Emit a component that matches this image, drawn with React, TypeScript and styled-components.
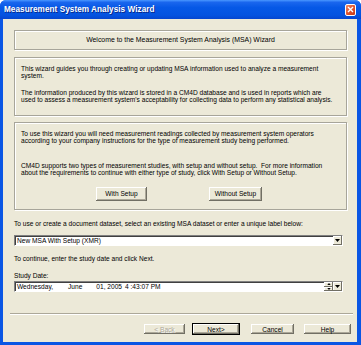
import React from "react";
import styled, { createGlobalStyle } from "styled-components";

const Global = createGlobalStyle`
  body {
    margin: 0;
    background: #fff;
  }
`;

const Window = styled.div`
  width: 361px;
  height: 345px;
  box-sizing: border-box;
  display: flex;
  flex-direction: column;
  background: #0a56e4;
  border-radius: 6px 6px 0 0;
  padding: 0 4px 3px 3px;
  font-family: "Liberation Sans", Arial, sans-serif;
  font-size: 6.6px;
  line-height: 7.4px;
  color: #000;
`;

const TitleBar = styled.div`
  height: 19px;
  margin: 0 -4px 0 -3px;
  padding: 0 4px 0 4px;
  display: flex;
  align-items: center;
  justify-content: space-between;
  border-radius: 6px 6px 0 0;
  background: linear-gradient(#4a97ff 0%, #1a66ee 12%, #0658e6 40%, #0453e0 80%, #0646cf 100%);
`;

const Title = styled.span`
  color: #fff;
  font-weight: bold;
  font-size: 8.2px;
  letter-spacing: 0.05px;
  text-shadow: 1px 1px 0 #0a2a8a;
`;

const CloseButton = styled.div`
  width: 11px;
  height: 12px;
  margin-right: 1px;
  border: 1px solid #fff;
  border-radius: 2px;
  box-sizing: border-box;
  background: linear-gradient(135deg, #f08a6a, #e0502a 55%, #c43a16);
  display: flex;
  align-items: center;
  justify-content: center;
`;

const Client = styled.div`
  flex: 1;
  background: #ece9d8;
  display: flex;
  flex-direction: column;
  padding: 11px 10px 0 11px;
`;

const WelcomeBox = styled.div`
  height: 20px;
  box-sizing: border-box;
  border: 1px solid #a7a59a;
  box-shadow: inset 1px 1px 0 #fff, 1px 1px 0 #fff;
  display: flex;
  align-items: center;
  justify-content: center;
  font-size: 6.9px;
`;

const GroupBox = styled.div<{ $height: number; $top: number }>`
  margin-top: ${p => p.$top}px;
  height: ${p => p.$height}px;
  box-sizing: border-box;
  border: 1px solid #a7a59a;
  box-shadow: inset 1px 1px 0 #fff, 1px 1px 0 #fff;
  padding: 7px 6px 0 6px;
  display: flex;
  flex-direction: column;
`;

const Para = styled.p<{ $top?: number }>`
  margin: ${p => p.$top || 0}px 0 0 0;
  white-space: nowrap;
`;

const ButtonRow = styled.div`
  margin-top: 9px;
  display: flex;
  justify-content: center;
  gap: 60px;
  padding-right: 3px;
`;

const Button = styled.div<{ $width: number; $height?: number; $left?: number; $default?: boolean; $disabled?: boolean }>`
  width: ${p => p.$width}px;
  height: ${p => p.$height || 12}px;
  margin-left: ${p => p.$left || 0}px;
  box-sizing: border-box;
  background: #ece9d8;
  border: 1px solid ${p => (p.$default ? "#000" : "#ece9d8")};
  box-shadow: inset -1px -1px 0 #716f64, inset 1px 1px 0 #fff, inset -2px -2px 0 #aca899;
  display: flex;
  align-items: center;
  justify-content: center;
  color: ${p => (p.$disabled ? "#aca899" : "#000")};
  text-shadow: ${p => (p.$disabled ? "1px 1px 0 #fff" : "none")};
`;

const Label = styled.div<{ $top: number }>`
  margin-top: ${p => p.$top}px;
  white-space: nowrap;
`;

const Field = styled.div<{ $top: number }>`
  margin-top: ${p => p.$top}px;
  width: 329px;
  height: 11px;
  box-sizing: border-box;
  background: #fff;
  border: 1px solid;
  border-color: #808080 #fff #fff #808080;
  box-shadow: inset 1px 1px 0 #404040;
  display: flex;
  align-items: center;
  padding-left: 2px;
  white-space: pre;
`;

const FieldText = styled.span`
  flex: 1;
`;

const DropButton = styled.div`
  width: 9px;
  height: 9px;
  box-sizing: border-box;
  background: #ece9d8;
  box-shadow: inset -1px -1px 0 #716f64, inset 1px 1px 0 #fff;
  display: flex;
  align-items: center;
  justify-content: center;
`;

const Spin = styled.div`
  width: 9px;
  height: 9px;
  display: flex;
  flex-direction: column;
`;

const SpinHalf = styled.div`
  flex: 1;
  background: #ece9d8;
  box-shadow: inset -1px -1px 0 #716f64, inset 1px 1px 0 #fff;
  display: flex;
  align-items: center;
  justify-content: center;
`;

const DatePart = styled.span<{ $left: number }>`
  margin-left: ${p => p.$left}px;
`;

const Separator = styled.div`
  margin: 21px -6px 0 -4px;
  height: 0;
  border-top: 1px solid #aca899;
  border-bottom: 1px solid #fff;
`;

const Footer = styled.div`
  margin-top: 8px;
  display: flex;
  justify-content: flex-end;
  margin-right: -5px;
`;

const Arrow = ({ up, small }: { up?: boolean; small?: boolean }) => (
  <svg width={small ? 4 : 5} height={small ? 2 : 3} viewBox="0 0 5 3">
    <path d={up ? "M0 3 L2.5 0 L5 3 Z" : "M0 0 L5 0 L2.5 3 Z"} fill="#000" />
  </svg>
);

export default function App() {
  return (
    <>
      <Global />
      <Window>
        <TitleBar>
          <Title>Measurement System Analysis Wizard</Title>
          <CloseButton>
            <svg width="7" height="7" viewBox="0 0 7 7">
              <path d="M1 1 L6 6 M6 1 L1 6" stroke="#fff" strokeWidth="1.4" />
            </svg>
          </CloseButton>
        </TitleBar>
        <Client>
          <WelcomeBox>Welcome to the Measurement System Analysis (MSA) Wizard</WelcomeBox>
          <GroupBox $top={7} $height={59}>
            <Para>
              This wizard guides you through creating or updating MSA information used to analyze a measurement
              <br />
              system.
            </Para>
            <Para $top={9}>
              The information produced by this wizard is stored in a CM4D database and is used in reports which are
              <br />
              used to assess a measurement system's acceptability for collecting data to perform any statistical analysis.
            </Para>
          </GroupBox>
          <GroupBox $top={6} $height={88}>
            <Para>
              To use this wizard you will need measurement readings collected by measurement system operators
              <br />
              according to your company instructions for the type of measurement study being performed.
            </Para>
            <Para $top={17}>
              CM4D supports two types of measurement studies, with setup and without setup.&nbsp; For more information
              <br />
              about the requirements to continue with either type of study, click With Setup or Without Setup.
            </Para>
            <ButtonRow>
              <Button $width={53} $height={16}>With Setup</Button>
              <Button $width={55} $height={16}>Without Setup</Button>
            </ButtonRow>
          </GroupBox>
          <Label $top={10}>To use or create a document dataset, select an existing MSA dataset or enter a unique label below:</Label>
          <Field $top={8}>
            <FieldText>New MSA With Setup (XMR)</FieldText>
            <DropButton><Arrow /></DropButton>
          </Field>
          <Label $top={9}>To continue, enter the study date and click Next.</Label>
          <Label $top={9}>Study Date:</Label>
          <Field $top={2}>
            <FieldText>
              Wednesday,
              <DatePart $left={15}>June</DatePart>
              <DatePart $left={14}>01, 2005</DatePart>
              <DatePart $left={3}>4 :43:07 PM</DatePart>
            </FieldText>
            <Spin>
              <SpinHalf><Arrow up small /></SpinHalf>
              <SpinHalf><Arrow small /></SpinHalf>
            </Spin>
            <DropButton><Arrow /></DropButton>
          </Field>
          <Separator />
          <Footer>
            <Button $width={43} $disabled>&lt; Back</Button>
            <Button $width={48} $left={6} $default>Next&gt;</Button>
            <Button $width={45} $left={10}>Cancel</Button>
            <Button $width={49} $left={8}>Help</Button>
          </Footer>
        </Client>
      </Window>
    </>
  );
}
